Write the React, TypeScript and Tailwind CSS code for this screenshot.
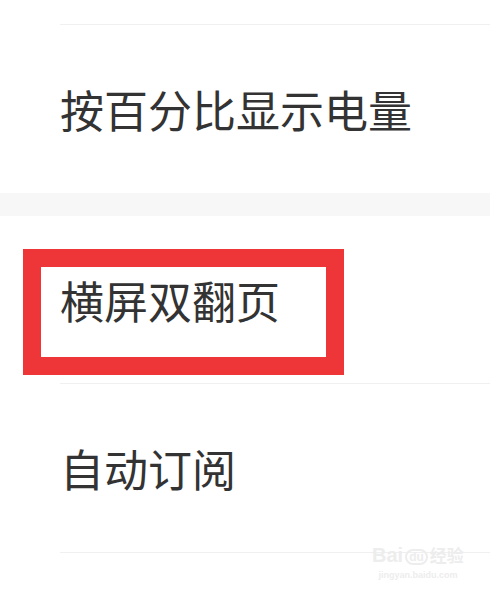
import React from 'react';

const font = { fontFamily: '"Noto Sans CJK SC", "Noto Sans", sans-serif' };

const Row: React.FC<{ label: string; h: string; children?: React.ReactNode }> = ({ label, h, children }) => (
    <div className={`relative ${h} flex items-center pl-[60px]`}>
        <span className="text-[44px] leading-none text-[#333333]">{label}</span>
        {children}
    </div>
);

const App: React.FC = () => {
    return (
        <div className="w-[490px] h-[591px] bg-white overflow-hidden relative" style={font}>
            <div className="h-[24px]" />
            <div className="ml-[60px] h-[1px] bg-[#f0f0f0]" />
            <Row label="按百分比显示电量" h="h-[168px]" />
            <div className="h-[23px] bg-[#f7f7f7]" />
            <Row label="横屏双翻页" h="h-[167px]">
                <div className="absolute left-[23px] top-[33px] w-[321px] h-[126px] border-[18px] border-[#ee3537]" />
            </Row>
            <div className="ml-[60px] h-[1px] bg-[#f0f0f0]" />
            <Row label="自动订阅" h="h-[168px]" />
            <div className="ml-[60px] h-[1px] bg-[#f0f0f0]" />

            {/* watermark */}
            <div className="absolute left-[372px] top-[545px] flex flex-col items-center text-[#ededed]" style={{ fontFamily: '"Liberation Sans", "Noto Sans CJK SC", sans-serif' }}>
                <div className="flex items-end gap-[2px] leading-none">
                    <span className="text-[20px] font-bold">Bai</span>
                    <span className="text-[12px] font-bold rounded-full border-2 border-[#ededed] px-[2px]">du</span>
                    <span className="text-[17px] font-bold">经验</span>
                </div>
                <span className="text-[9px] mt-[4px] font-bold">jingyan.baidu.com</span>
            </div>
        </div>
    );
};

export default App;
